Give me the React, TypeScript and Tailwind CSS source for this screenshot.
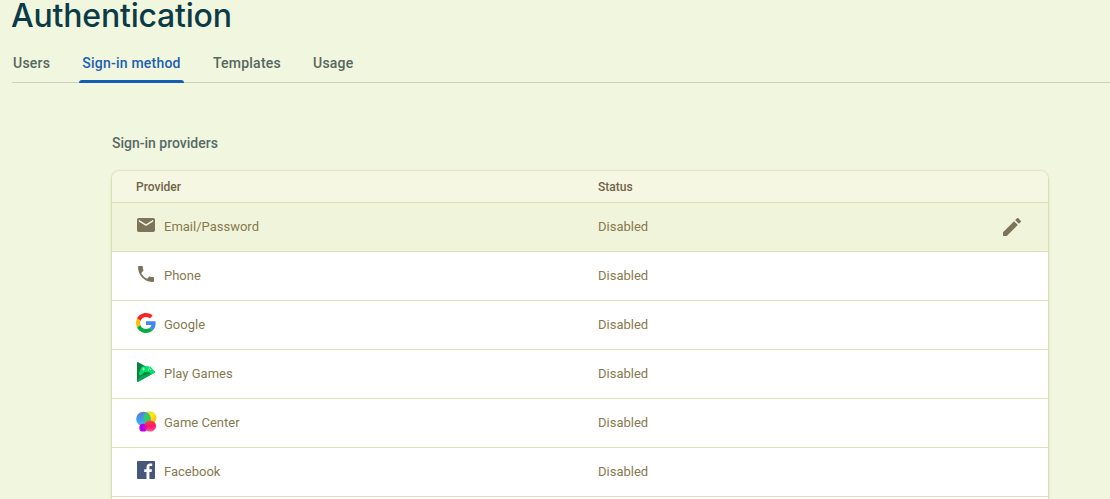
import React from "react";

const tabs = ["Users", "Sign-in method", "Templates", "Usage"];

function MailIcon() {
  return (
    <svg viewBox="2 4 20 16" className="-mt-[5px] ml-px h-[14px] w-[18px]" preserveAspectRatio="none">
      <path fill="#7d755b" d="M20 4H4c-1.1 0-2 .9-2 2v12c0 1.100.9 2 2 2h16c1.100 0 2-.9 2-2V6c0-1.100-.9-2-2-2zm0 4l-8 5-8-5V6l8 5 8-5v2z" />
    </svg>
  );
}

function PhoneIcon() {
  return (
    <svg viewBox="3 3 18 18" className="-mt-[5px] ml-[2px] h-4 w-4">
      <path fill="#7d755b" d="M6.620 10.790c1.440 2.830 3.760 5.140 6.590 6.590l2.200-2.200c.27-.27.67-.36 1.020-.24 1.120.37 2.330.57 3.570.57.55 0 1 .45 1 1V20c0 .55-.45 1-1 1-9.390 0-17-7.610-17-17 0-.55.45-1 1-1h3.500c.55 0 1 .45 1 1 0 1.250.2 2.450.57 3.570.11.35.03.74-.25 1.020l-2.200 2.200z" />
    </svg>
  );
}

function GoogleIcon() {
  return (
    <svg viewBox="0 0 48 48" className="-mt-[5px] h-5 w-5">
      <path fill="#fb2222" d="M24 9.500c3.540 0 6.710 1.220 9.210 3.600l6.850-6.850C35.900 2.380 30.470 0 24 0 14.620 0 6.510 5.380 2.560 13.220l7.980 6.190C12.430 13.720 17.740 9.500 24 9.500z" />
      <path fill="#4285f4" d="M46.980 24.550c0-1.570-.15-3.090-.38-4.550H24v9.020h12.940c-.58 2.960-2.260 5.480-4.780 7.180l7.730 6c4.510-4.180 7.090-10.360 7.090-17.650z" />
      <path fill="#ffbd00" d="M10.530 28.590c-.48-1.450-.76-2.990-.76-4.590s.27-3.140.76-4.590l-7.980-6.190C.92 16.460 0 20.120 0 24s.92 7.540 2.560 10.780z" />
      <path fill="#05ad42" d="M24 48c6.480 0 11.930-2.130 15.890-5.810l-7.730-6c-2.150 1.450-4.920 2.300-8.160 2.300-6.260 0-11.570-4.220-13.470-9.910l-7.980 6.190C6.510 42.620 14.620 48 24 48z" />
    </svg>
  );
}

function PlayGamesIcon() {
  return (
    <svg viewBox="0 0 18 20" className="-mt-[5px] ml-px h-5 w-[18px]">
      <path fill="#08803f" d="M0 .8C0 .1.600-.1 1.200.2L17.400 9.200c.7.400.7 1.200 0 1.600L1.200 19.800C.6 20.100 0 19.900 0 19.200z" />
      <path fill="#05a951" d="M2.500 14.700L13 11.200l1.700 1.100L1.200 19.800C.6 20.100 0 19.900 0 19.200z" />
      <path fill="#00df68" d="M4 5.900C4.500 4.700 5.400 4.200 6.800 4.200h4.600c1.600 0 2.800.8 3.600 2.300l2.400 2.700c.8.500.7 1.200 0 1.600l-2 1.200c-1.400.5-2.500-.9-3.200-1.700H7.300l-2.700 2.500c-1.300 1.300-3 .6-2.700-1.200z" />
      <path stroke="#c7ffdf" strokeWidth=".9" d="M6.500 5.700v2.800M5.100 7.100h2.800" />
      <circle cx="12.400" cy="6.100" r=".7" fill="#d9ffea" />
      <circle cx="13.700" cy="7.500" r=".7" fill="#b8ffd7" />
      <circle cx="11.400" cy="8" r=".7" fill="#9bf5c2" />
    </svg>
  );
}

function GameCenterIcon() {
  return (
    <svg viewBox="0 0 21 21" className="-mt-[4px] h-[21px] w-[21px]">
      <defs>
        <linearGradient id="gcBlue" x2="0" y2="1"><stop stopColor="#6674df" /><stop offset=".6" stopColor="#39a0ee" /><stop offset="1" stopColor="#43c9eb" /></linearGradient>
        <linearGradient id="gcYellow" x2="1" y2="1"><stop stopColor="#d8df27" /><stop offset=".5" stopColor="#ffe712" /><stop offset="1" stopColor="#ffad00" /></linearGradient>
        <linearGradient id="gcPink" x2="0" y2="1"><stop stopColor="#ff4734" /><stop offset=".5" stopColor="#ff146f" /><stop offset="1" stopColor="#ff5390" /></linearGradient>
      </defs>
      <circle cx="13.900" cy="6.700" r="6.500" fill="url(#gcYellow)" />
      <circle cx="7.500" cy="8" r="7.300" fill="url(#gcBlue)" />
      <path fill="#35c969" d="M10 1.500a7.300 7.300 0 0 1 3 11.300 6.500 6.500 0 0 1-5.500-5 6.500 6.500 0 0 1 2.500-6.300z" />
      <circle cx="7.200" cy="16.700" r="3.900" fill="#b500ec" />
      <ellipse cx="14.200" cy="15" rx="5.900" ry="5.500" fill="url(#gcPink)" />
      <path fill="#d51594" d="M8.900 13.200a4 4 0 0 1 1.700 5.700 5.700 5.700 0 0 1-1.700-5.700z" />
    </svg>
  );
}

function FacebookIcon() {
  return (
    <svg viewBox="0 0 18 18" className="-mt-[5px] ml-px h-[18px] w-[18px]">
      <rect width="18" height="18" rx=".8" fill="#475779" />
      <path fill="#fff" d="M9.500 18v-7H7.200V8.300h2.300V6.200c0-2.400 1.500-3.700 3.600-3.700 1 0 1.900.1 2.100.1v2.500h-1.400c-1.200 0-1.400.5-1.400 1.300v1.900H15l-.4 2.700h-2.200v7z" />
    </svg>
  );
}

const providers = [
  { name: "Email/Password", Icon: MailIcon },
  { name: "Phone", Icon: PhoneIcon },
  { name: "Google", Icon: GoogleIcon },
  { name: "Play Games", Icon: PlayGamesIcon },
  { name: "Game Center", Icon: GameCenterIcon },
  { name: "Facebook", Icon: FacebookIcon },
];

export default function App() {
  return (
    <main className="flex h-[499px] w-full flex-col overflow-hidden bg-[#f1f6de] font-['Roboto',sans-serif]">
      <header className="pl-3">
        <h1 className="-ml-px h-[45px] font-['Inter',sans-serif] text-[32px] leading-8 font-[450] tracking-[-0.2px] text-[#0b3b46]">Authentication</h1>
        <nav className="flex h-[38px] gap-[26px] border-b border-[#cbd0bc] text-sm font-medium tracking-[0.22px] text-[#566660]">
          {tabs.map((tab, i) => (
            <button key={tab} className={i === 1 ? "flex h-[38px] w-[105px] flex-col items-center text-[#1a5fb4]" : i === 0 ? "flex w-[41px] flex-col pl-px text-left" : i === 2 ? "flex w-[74px] flex-col pl-[3px] text-left" : "flex flex-col px-[3px]"}>
              <span className={i === 1 ? "h-[35px] px-[3px] pt-[8px] leading-5" : "pt-[8px] leading-5"}>{tab}</span>
              {i === 1 && <span className="h-[3px] w-full shrink-0 rounded-t-[3px] bg-[#125eb5]" />}
            </button>
          ))}
        </nav>
      </header>
      <section className="mt-[50px] ml-28 w-[936px]">
        <h2 className="h-[38px] text-sm leading-5 font-medium text-[#566a68]">Sign-in providers</h2>
        <div className="overflow-hidden rounded-t-lg bg-white shadow-[0_0_2px_rgba(137,126,51,0.4),0_1px_3px_rgba(137,126,51,0.3)]">
          <div className="grid h-8 grid-cols-[462px_1fr] items-center border-b border-[#dfddb5] bg-[#f5f7e2] px-6 text-xs font-medium text-[#706346]">
            <span>Provider</span><span>Status</span>
          </div>
          {providers.map(({ name, Icon }, i) => (
            <div key={name} className={`grid h-[49px] grid-cols-[28px_434px_1fr_20px] items-center border-b border-[#e1dfba] px-6 text-[13px] text-[#877a50] ${i === 0 ? "bg-[#f0f4da]" : "bg-white"}`}>
              <Icon />
              <span>{name}</span>
              <span>Disabled</span>
              {i === 0 && <svg viewBox="3 3 18 18" className="-ml-px h-[18px] w-[18px]"><path fill="#7d755b" d="M3 17.250V21h3.750L17.810 9.940l-3.750-3.750L3 17.250zM20.710 7.040c.39-.39.39-1.020 0-1.410l-2.340-2.340c-.39-.39-1.020-.39-1.410 0l-1.830 1.830 3.750 3.750 1.830-1.830z" /></svg>}
            </div>
          ))}
          <div className="h-10 bg-white" />
        </div>
      </section>
    </main>
  );
}
